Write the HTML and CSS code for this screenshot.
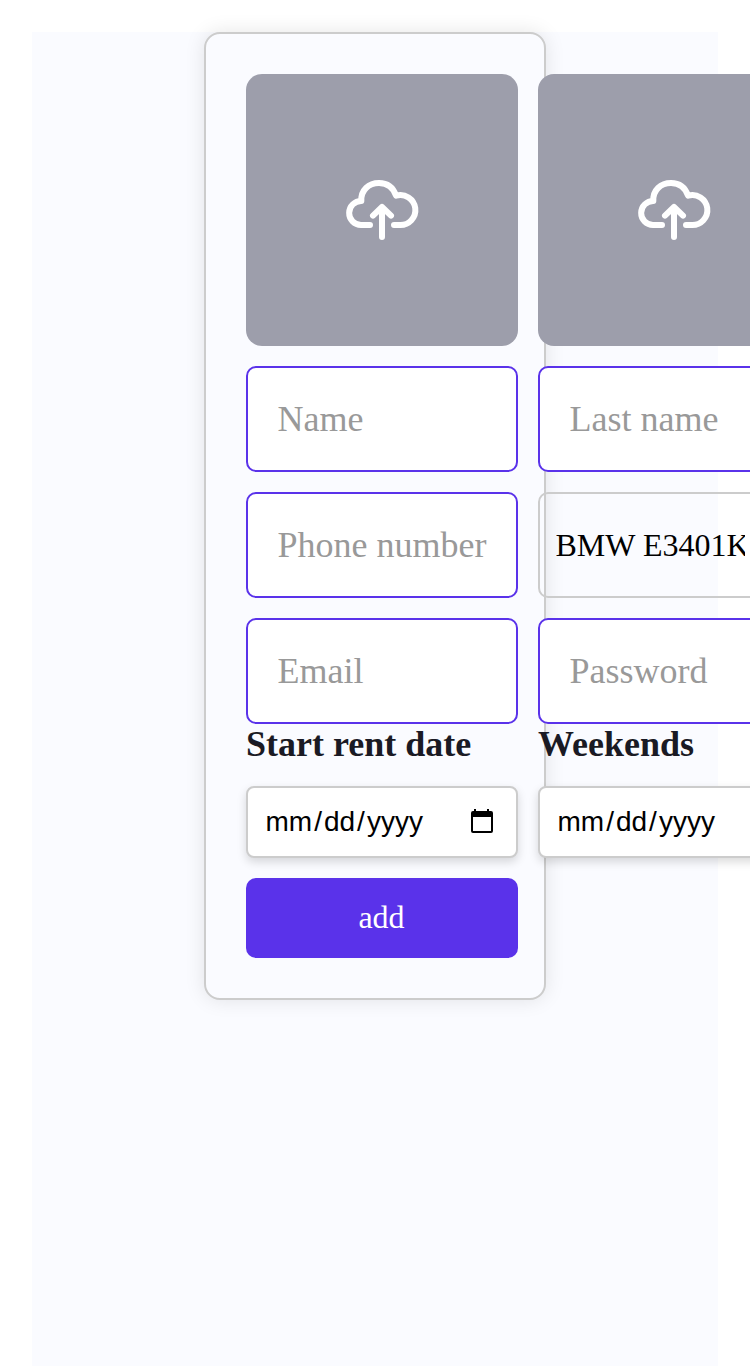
FILE: index.html
```html
<!DOCTYPE html>
<html lang="en">
<head>
<meta charset="utf-8">
<title>Add client</title>
<link rel="stylesheet" href="styles.css">
</head>
<body>
<svg class="sprite" aria-hidden="true">
  <symbol id="upload" viewBox="36 30 240 240">
    <path d="M120 195H93A36 36 0 1 1 94 123C92 91 116 69 147 69C172 69 190 83 198 107A45 45 0 1 1 209 195H192M156 231V142M129 167L156 141L183 167"/>
  </symbol>
</svg>
<main class="page">
  <form class="card">
    <label class="upload"><svg class="upload-icon"><use href="#upload"/></svg></label>
    <label class="upload"><svg class="upload-icon"><use href="#upload"/></svg></label>
    <input class="field" type="text" placeholder="Name">
    <input class="field" type="text" placeholder="Last name">
    <input class="field" type="text" placeholder="Phone number">
    <div class="select"><span class="select-value">BMW E3401K</span></div>
    <input class="field" type="email" placeholder="Email">
    <input class="field" type="password" placeholder="Password">
    <div class="date-group">
      <h4 class="date-title">Start rent date</h4>
      <div class="date">
        <span class="part">mm</span><span class="slash">/</span><span class="part">dd</span><span class="slash">/</span><span class="part">yyyy</span>
        <svg class="calendar" viewBox="0 0 24 26"><path fill-rule="evenodd" d="M4 0h2v2h11V0h2v2h2a2 2 0 0 1 2 2v18a2 2 0 0 1-2 2H3a2 2 0 0 1-2-2V4a2 2 0 0 1 2-2h1zM3 8v14h18V8z"/></svg>
      </div>
    </div>
    <div class="date-group">
      <h4 class="date-title">Weekends</h4>
      <div class="date">
        <span class="part">mm</span><span class="slash">/</span><span class="part">dd</span><span class="slash">/</span><span class="part">yyyy</span>
      </div>
    </div>
    <button class="add" type="button">add</button>
  </form>
</main>
</body>
</html>
```
FILE: styles.css
```css
* { box-sizing: border-box; }
html { overflow: hidden; }
body {
  margin: 0;
  padding: 32px 32px 0;
  background: #fff;
  color: #1a1a24;
  font-family: "Liberation Serif", "Times New Roman", serif;
}
.sprite { display: none; }
.page {
  display: flex;
  justify-content: center;
  align-items: flex-start;
  height: 1334px;
  background: #fafbff;
}
.card {
  display: grid;
  grid-template-columns: 272px 272px;
  grid-template-rows: 272px 106px 106px 106px 114px 80px;
  row-gap: 20px;
  column-gap: 20px;
  width: 342px;
  height: 968px;
  padding: 40px;
  border: 2px solid #ccc;
  border-radius: 16px;
  background: #fafbff;
  box-shadow: 0 0 20px rgba(0, 0, 0, 0.1);
}
.upload {
  display: flex;
  align-items: center;
  justify-content: center;
  border-radius: 16px;
  background: #9d9eab;
}
.upload-icon {
  width: 80px;
  height: 80px;
  fill: none;
  stroke: #fff;
  stroke-width: 18;
  stroke-linecap: round;
  stroke-linejoin: round;
}
.field {
  width: 272px;
  height: 106px;
  padding: 0 28px 1px 29.5px;
  border: 2px solid #5a32ea;
  border-radius: 10px;
  background: #fff;
  font: 36px "Liberation Serif", "Times New Roman", serif;
}
.field::placeholder { color: #999; opacity: 1; }
.select {
  display: flex;
  align-items: center;
  padding: 0 48px 0 15.5px;
  border: 2px solid #ccc;
  border-radius: 10px;
  color: #000;
  font-size: 32px;
}
.select-value {
  width: 189px;
  overflow: hidden;
  white-space: nowrap;
}
.date-group {
  display: flex;
  flex-direction: column;
  justify-content: space-between;
  margin-top: -20px;
}
.date-title {
  margin: 0;
  font-size: 36px;
  line-height: 41px;
}
.date {
  display: flex;
  align-items: center;
  height: 72px;
  padding: 0 22px 0 15.5px;
  border: 2px solid #ccc;
  border-radius: 8px;
  background: #fff;
  box-shadow: 0 4px 10px rgba(0, 0, 0, 0.15);
  color: #000;
  font: 28px "Liberation Sans", Arial, sans-serif;
}
.part { padding: 0 2px; }
.calendar { width: 24px; height: 26px; margin-left: auto; }
.add {
  height: 80px;
  padding: 0 1px 1px 0;
  border: 0;
  border-radius: 10px;
  background: #5a32ea;
  color: #fff;
  font: 32px "Liberation Serif", "Times New Roman", serif;
}
```
